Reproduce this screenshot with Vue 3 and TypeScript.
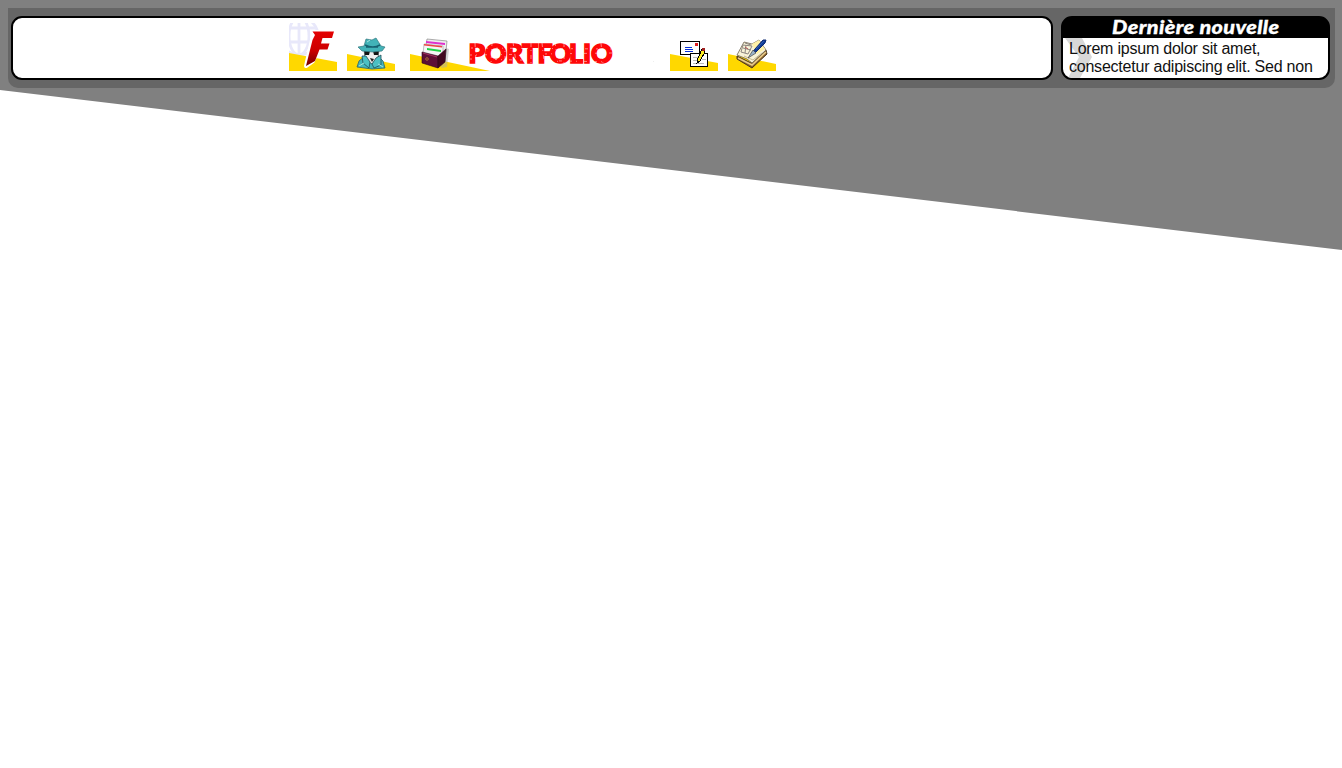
<script setup lang="ts">
const news = {
  title: 'Dernière nouvelle',
  body: 'Lorem ipsum dolor sit amet, consectetur adipiscing elit. Sed non',
}
</script>

<template>
  <div class="page">
    <svg class="backdrop" width="1342" height="251" viewBox="0 0 1342 251">
      <path d="M0 0H1342V250L0 90Z" fill="#808080" />
    </svg>
    <header class="header">
      <nav class="nav">
        <a class="item">
          <svg width="48" height="48" viewBox="0 0 48 48">
            <g fill="none" stroke="#e8e8fa" stroke-width="2.8">
              <circle cx="10" cy="13" r="19" />
              <ellipse cx="10" cy="13" rx="10" ry="19" />
              <path d="M10 0V32M-9 5H27M-9 19H29" />
            </g>
            <path d="M0 30L48 39V48H0Z" fill="#ffd800" />
            <path d="M24 9H45L42.500 15H32.500L31 21H40L38 27H29L24 38L17 43L23 17Z" fill="#fff" stroke="#fff" stroke-width="4" stroke-linejoin="round" />
            <path d="M23.500 8.500H45L43 15H33.500L32 20.500H40.500L38.500 26.500H30.500L26 38L17 43L23.500 17L26 12Z" fill="url(#red)" />
            <defs><linearGradient id="red" x1="0" y1="0" x2="0" y2="1"><stop stop-color="#e40202" /><stop offset=".55" stop-color="#cc0000" /><stop offset="1" stop-color="#700000" /></linearGradient></defs>
          </svg>
        </a>
        <a class="item">
          <svg width="48" height="48" viewBox="0 0 48 48">
            <path d="M0 31L48 41V48H0Z" fill="#ffd800" />
            <path d="M10 44L12 38L18 33L32 34L36 38L38 45L25 46Z" fill="#42b6bd" stroke="#2d6268" stroke-width=".8" />
            <path d="M17 26H32L31 36L25 41L18 36Z" fill="#eee" stroke="#243c42" stroke-width=".7" />
            <path d="M15 33L19 33L23 39L22 45L16 40ZM34 32L29 35L25 41L27 45L34 42Z" fill="#4cc0c4" stroke="#214e59" stroke-width=".8" />
            <path d="M17 27L23 28L22 32H18ZM26 28L32 27L31 32H27Z" fill="#111" />
            <path d="M17 23L19 16L25 17L29 15L34 23L38 24L35 28L26 29L15 28L11 24Z" fill="#42b3b8" stroke="#357980" stroke-width=".7" />
            <path d="M18 22Q26 26 33 22M19 24H31" fill="none" stroke="#166170" stroke-width="1.500" />
            <path d="M23 35L27 36L25 39Z" fill="#222" />
            <path d="M12 43L17 40M31 41L36 44M20 19L23 17" stroke="#a5e4dc" />
          </svg>
        </a>
        <a class="item portfolio">
          <svg width="246" height="48" viewBox="0 0 246 48">
            <path d="M0 31L80 48H0Z" fill="#ffd800" />
            <path d="M33 24L39 26L37 44L31 45Z" fill="#aaa" opacity=".5" />
            <path d="M17 16L37 18L35 38L14 34Z" fill="#eee" stroke="#777" stroke-width=".6" />
            <path d="M16 18L35 20V22L16 20Z" fill="#df30cf" />
            <path d="M14 21L33 23V35L13 31Z" fill="#f5f5f5" stroke="#999" stroke-width=".6" />
            <path d="M14 21L32 23V24.500L14 22.500Z" fill="#ef4444" />
            <path d="M17 25L31 27V29L17 27Z" fill="#21d447" />
            <path d="M12 29L28 33V45L12 40Z" fill="#5d1037" stroke="#2d0719" stroke-width=".6" />
            <path d="M28 33L36 26L35 39L28 45Z" fill="#42091f" stroke="#2d0719" stroke-width=".6" />
            <path d="M13 30L27 34" stroke="#a23160" />
            <circle cx="17" cy="36" r="1.3" fill="none" stroke="#a56936" />
            <text class="wordmark" y="39.500" x="58.500 75 96 112 127.500 139.500 159 173 181">PORTFOLIO</text>
            <path d="M65 20L66 40M82 19L81 41M95 21V40M103 19L106 39M121 20V40M132 20L134 38M145 19L148 42M154 20V40M191 20L193 41" stroke="#fff" stroke-width=".5" stroke-dasharray="4 3 1 4" />
            <path d="M60 36L202 39M60 32L202 30M61 25L202 26" stroke="#fff" stroke-width=".5" stroke-dasharray="2 4 1 7 3 8" />
            <path d="M243 38h1v1h-1z" fill="#eee" />
          </svg>
        </a>
        <a class="item">
          <svg width="48" height="48" viewBox="0 0 48 48" shape-rendering="crispEdges">
            <path d="M0 31L48 40V48H0Z" fill="#ffd800" shape-rendering="auto" />
            <path d="M10.500 18.500H29.500V31.500H10.500Z" fill="#fff" stroke="#000" />
            <path d="M15 24H22V25H15ZM15 26H23V27H15ZM15 28H23V29H15Z" fill="#0830d8" />
            <path d="M25 20H28V23H25Z" fill="#df2020" />
            <path d="M20.500 30.500H37.500V43.500H20.500Z" fill="#fff" stroke="#000" />
            <path d="M23 34.500H29M23 37.500H28M23 40.500H34M32 36.500H36" stroke="#b9b9b9" />
            <path d="M32 26L35 29L30 38L27 40L28 35Z" fill="#ffed24" stroke="#000" />
            <path d="M32 25H35V28H32Z" fill="#a02020" />
            <path d="M27 39H29V40H27Z" fill="#000" />
          </svg>
        </a>
        <a class="item">
          <svg width="48" height="48" viewBox="0 0 48 48">
            <path d="M0 31L48 41V48H0Z" fill="#ffd800" />
            <path d="M9 33L23 40L38 27L39 31L24 45L9 36Z" fill="#8c632c" stroke="#4b3921" />
            <path d="M9 32L16 19L24 21L31 17L38 27L24 40L19 36Z" fill="#f8f3d8" stroke="#6b614c" stroke-width=".8" />
            <path d="M10 35L24 42L38 29" fill="none" stroke="#e8cd8c" stroke-width="1.5" />
            <path d="M24 21L31 17L37 26L29 31Z" fill="#fff1a8" />
            <path d="M15 22L24 23L20 31L13 29ZM17 20L23 22M15 25L23 27M18 22L17 30" fill="none" stroke="#8c8680" />
            <path d="M17 24L20 26" stroke="#b85454" />
            <path d="M16 33L25 37L34 30" fill="none" stroke="#c8b990" />
            <path d="M24 30L27 26L35 17L38 17L37 20L28 29Z" fill="#123c96" stroke="#102d72" />
            <path d="M20 35L25 27L28 30Z" fill="#9bb3c9" stroke="#333" stroke-width=".6" />
            <path d="M28 26L36 18" stroke="#2c5cb4" />
          </svg>
        </a>
      </nav>
      <section class="news">
        <h2><span>{{ news.title }}</span></h2>
        <svg class="chevron" width="29" height="40" viewBox="0 0 29 40"><path d="M2 0H19L29 19L17 40H5L16 19Z" fill="#d8d8d8" /></svg>
        <p>{{ news.body }}</p>
      </section>
    </header>
  </div>
</template>

<style>
body {
  margin: 0;
  background: #fff;
}
</style>

<style scoped>
.page {
  position: relative;
  height: 768px;
  overflow: hidden;
}

.backdrop {
  position: absolute;
  top: 0;
  left: 0;
}

.header {
  position: relative;
  display: flex;
  gap: 8px;
  box-sizing: border-box;
  width: 1327px;
  height: 80px;
  margin: 8px 0 0 8px;
  padding: 8px 5px 8px 3px;
  border-radius: 0 0 10px 10px;
  background: #666;
}

.nav {
  display: flex;
  gap: 10px;
  box-sizing: border-box;
  width: 1042px;
  padding: 5px 0 0 276px;
  border: 2px solid #000;
  border-radius: 11px;
  background: #fff;
}

.item {
  height: 48px;
}

.item svg,
.chevron {
  display: block;
}

.portfolio {
  width: 246px;
  margin: 0 4px 0 5px;
}

.wordmark {
  font: 900 26.5px Lato, sans-serif;
  fill: #ff0808;
  stroke: #ff0808;
  stroke-width: 1.6px;
}

.news {
  position: relative;
  box-sizing: border-box;
  width: 269px;
  overflow: hidden;
  border: 2px solid #000;
  border-radius: 11px;
  background: linear-gradient(#000 22px, #fff 22px) border-box;
}

.news h2 {
  height: 20px;
  margin: 0;
  color: #fff;
  font: italic 900 18px/18px Lato, sans-serif;
  letter-spacing: 0.3px;
  text-align: center;
}

.news h2 span {
  display: inline-block;
  transform: scaleX(1.2);
  -webkit-text-stroke: 0.3px #fff;
}

.chevron {
  position: absolute;
  top: 20px;
  left: 0;
}

.news p {
  position: relative;
  margin: 2px 0 0 6px;
  color: #111;
  font: 16px/18px "Liberation Sans", Arial, sans-serif;
  letter-spacing: -0.225px;
}
</style>
